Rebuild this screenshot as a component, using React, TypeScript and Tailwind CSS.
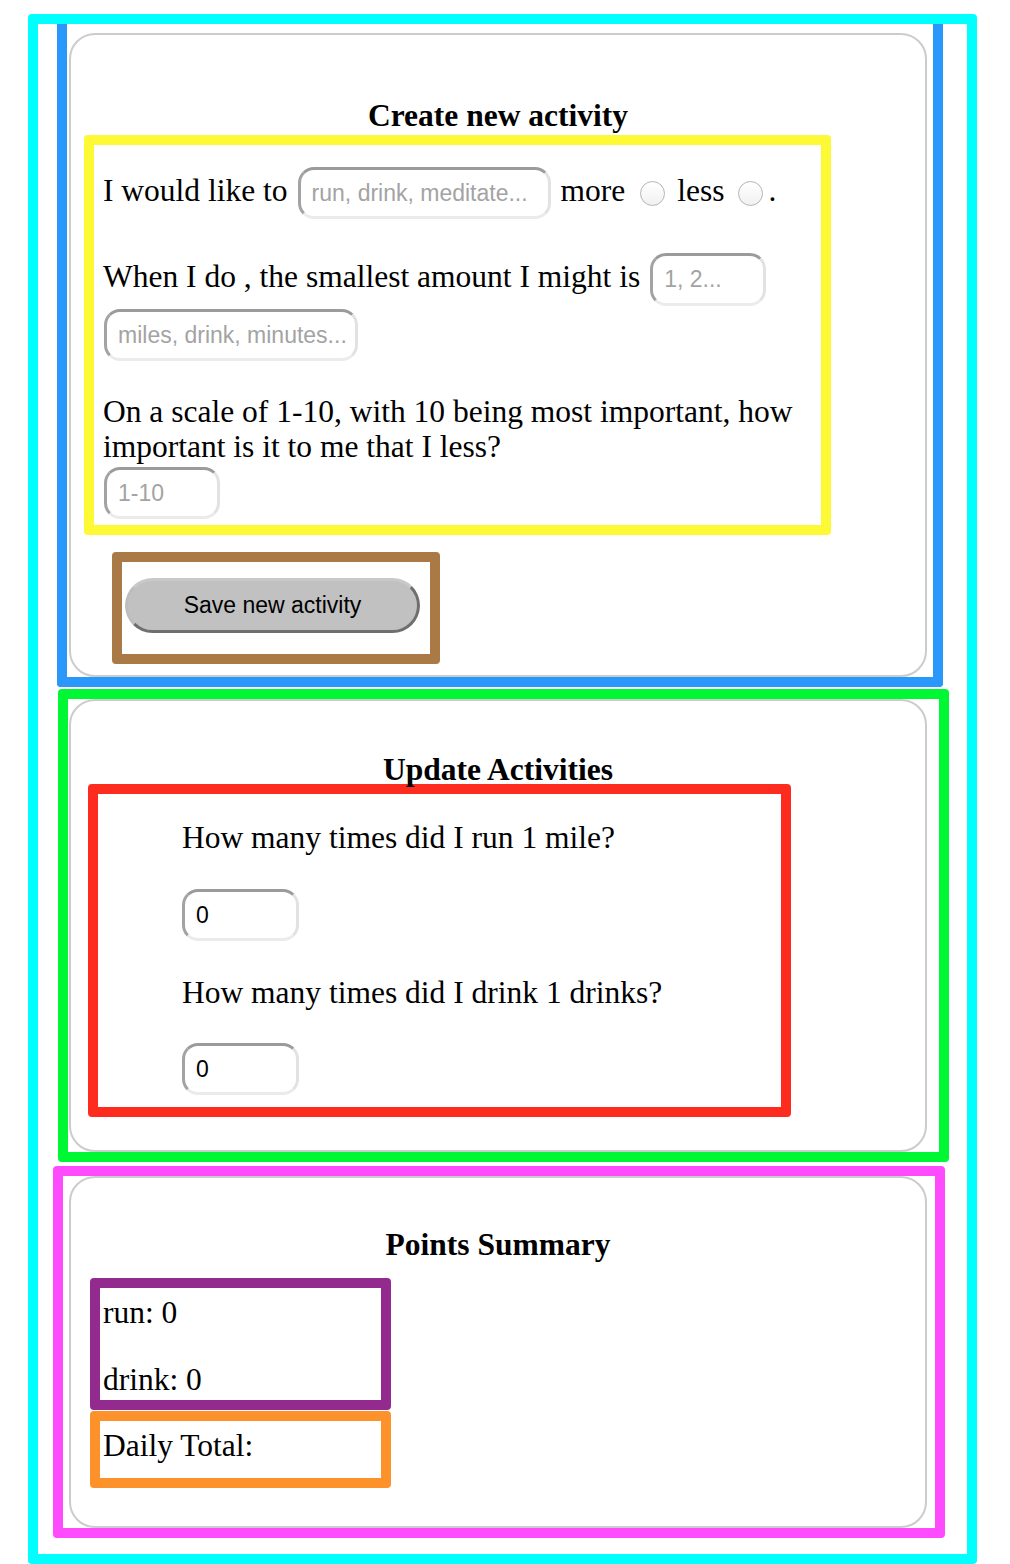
import React from "react";

const field =
  "h-[52px] rounded-[16px] border-[3px] border-t-[#9b9b9b] border-l-[#a3a3a3] border-r-[#e2e2e2] border-b-[#ebebeb] bg-white pl-[11px] font-['Liberation_Sans',sans-serif] text-[23px] text-black placeholder:text-[#a3a3a3] outline-none";

function Radio({ className = "" }: { className?: string }) {
  return (
    <input
      type="radio"
      readOnly
      className={`appearance-none self-center w-[25px] h-[25px] rounded-full border border-[#b5b5b5] bg-linear-to-b from-white to-[#f1f1f1] ${className}`}
    />
  );
}

function Heading({ children, className = "" }: { children: React.ReactNode; className?: string }) {
  return (
    <h2 className={`text-center font-bold text-[31.5px] leading-[36px] ${className}`}>
      {children}
    </h2>
  );
}

export default function App() {
  return (
    <div className="w-[1010px] h-[1564px] overflow-hidden bg-white pl-[28px] pt-[14px] font-['Liberation_Serif',serif] text-black text-[31.5px] leading-[35px]">
      <div className="w-[949px] h-[1550px] rounded-[4px] border-[10px] border-[#00ffff]">
        {/* Create new activity */}
        <div className="ml-[19px] w-[886px] h-[663px] border-x-[10px] border-b-[10px] border-t-0 border-[#2a97fb] rounded-b-[4px] pt-[9px]">
          <div className="ml-[2px] w-[858px] h-[644px] rounded-[26px] border-2 border-[#cccccc]">
            <Heading className="mt-[63px]">Create new activity</Heading>

            <div className="mt-[1px] ml-[13px] w-[747px] h-[400px] rounded-[4px] border-[10px] border-[#fdf935] pl-[9px] pt-[22px]">
              <div className="flex items-baseline">
                <span>I would like to</span>
                <input readOnly placeholder="run, drink, meditate..." className={`${field} ml-[10px] w-[253px]`} />
                <span className="ml-[10px]">more</span>
                <Radio className="ml-[15px]" />
                <span className="ml-[12px]">less</span>
                <Radio className="ml-[13px]" />
                <span className="ml-[6px]">.</span>
              </div>

              <div className="mt-[34px] flex items-baseline">
                <span>When I do , the smallest amount I might is</span>
                <input readOnly placeholder="1, 2..." className={`${field} ml-[10px] w-[116px] h-[53px]`} />
              </div>
              <input readOnly placeholder="miles, drink, minutes..." className={`${field} mt-[3px] ml-[1px] w-[254px] block`} />

              <p className="mt-[33px] pr-[10px]">
                On a scale of 1-10, with 10 being most important, how important is it to me that I less?
              </p>
              <input readOnly placeholder="1-10" className={`${field} mt-[3px] ml-[1px] w-[116px] block`} />
            </div>

            <div className="mt-[17px] ml-[41px] w-[328px] h-[112px] rounded-[4px] border-[10px] border-[#a97a46] pl-[3px] pt-[16px]">
              <button className="w-[295px] h-[55px] rounded-full border-[3px] border-t-[#c9c9c9] border-l-[#bdbdbd] border-r-[#6f6f6f] border-b-[#6f6f6f] bg-[#c1c1c1] font-['Liberation_Sans',sans-serif] text-[23px] text-black">
                Save new activity
              </button>
            </div>
          </div>
        </div>

        {/* Update Activities */}
        <div className="mt-[2px] ml-[20px] w-[891px] h-[473px] rounded-[4px] border-[10px] border-[#00f734]">
          <div className="ml-[1px] w-[858px] h-[453px] rounded-[26px] border-2 border-[#cccccc]">
            <Heading className="mt-[51px]">Update Activities</Heading>
            <div className="-mt-[4px] ml-[17px] w-[703px] h-[333px] rounded-[4px] border-[10px] border-[#fe2b1f] pl-[84px] pt-[26px]">
              <p>How many times did I run 1 mile?</p>
              <input readOnly defaultValue="0" className={`${field} mt-[34px] w-[117px] block`} />
              <p className="mt-[34px]">How many times did I drink 1 drinks?</p>
              <input readOnly defaultValue="0" className={`${field} mt-[33px] w-[117px] block`} />
            </div>
          </div>
        </div>

        {/* Points Summary */}
        <div className="mt-[4px] ml-[15px] w-[892px] h-[372px] rounded-[4px] border-[10px] border-[#fe4bfe]">
          <div className="ml-[6px] w-[858px] h-[352px] rounded-[26px] border-2 border-[#cccccc]">
            <Heading className="mt-[49px]">Points Summary</Heading>
            <div className="mt-[15px] ml-[19px] w-[301px] h-[132px] rounded-[4px] border-[10px] border-[#932a8d] pl-[3px] pt-[7px]">
              <p>run: 0</p>
              <p className="mt-[32px]">drink: 0</p>
            </div>
            <div className="mt-[1px] ml-[19px] w-[301px] h-[77px] rounded-[4px] border-[10px] border-[#fc9229] pl-[3px] pt-[7px]">
              <p>Daily Total:</p>
            </div>
          </div>
        </div>
      </div>
    </div>
  );
}
